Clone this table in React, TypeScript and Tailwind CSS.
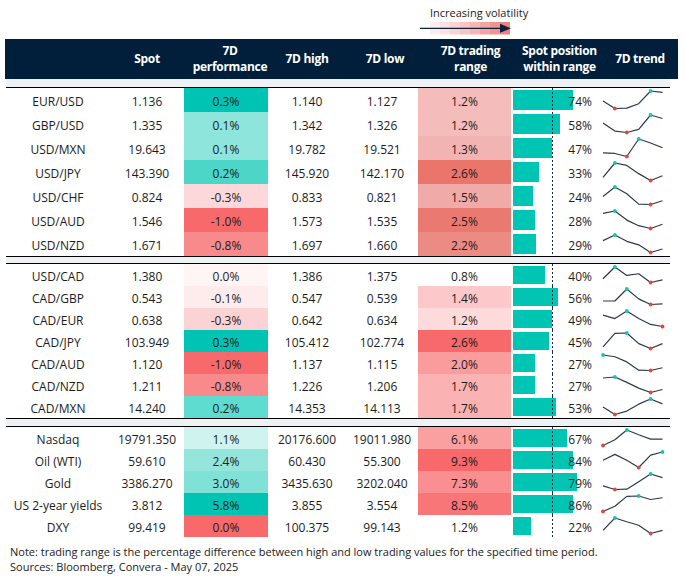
import React from 'react';

type Row = {
  label: string; spot: string; perf: string; pBg: string; high: string; low: string;
  range: string; rBg: string; pos: string; bar: number; spark: number[];
};

const G1: Row[] = [
  { label: 'EUR/USD', spot: '1.136', perf: '0.3%', pBg: '#00c4b3', high: '1.140', low: '1.127', range: '1.2%', rBg: '#f4bdbb', pos: '74%', bar: 60, spark: [38, 60, 59, 46, 9, 13] },
  { label: 'GBP/USD', spot: '1.335', perf: '0.1%', pBg: '#8de5dc', high: '1.342', low: '1.326', range: '1.2%', rBg: '#f4bdbb', pos: '58%', bar: 47, spark: [32, 55, 59, 50, 9, 19] },
  { label: 'USD/MXN', spot: '19.643', perf: '0.1%', pBg: '#8de5dc', high: '19.782', low: '19.521', range: '1.3%', rBg: '#f2b4b2', pos: '47%', bar: 39, spark: [49, 51, 60, 8, 20, 34] },
  { label: 'USD/JPY', spot: '143.390', perf: '0.2%', pBg: '#4cd6c8', high: '145.920', low: '142.170', range: '2.6%', rBg: '#e9756b', pos: '33%', bar: 26, spark: [51, 9, 16, 40, 60, 46] },
  { label: 'USD/CHF', spot: '0.824', perf: '-0.3%', pBg: '#fdd8da', high: '0.833', low: '0.821', range: '1.5%', rBg: '#f0aaa7', pos: '24%', bar: 20, spark: [36, 8, 28, 59, 60, 49] },
  { label: 'USD/AUD', spot: '1.546', perf: '-1.0%', pBg: '#f8696b', high: '1.573', low: '1.535', range: '2.5%', rBg: '#ea7a71', pos: '28%', bar: 22, spark: [17, 10, 36, 52, 60, 48] },
  { label: 'USD/NZD', spot: '1.671', perf: '-0.8%', pBg: '#f98a8c', high: '1.697', low: '1.660', range: '2.2%', rBg: '#ec8b84', pos: '29%', bar: 23, spark: [25, 9, 27, 37, 59, 49] },
];

const G2: Row[] = [
  { label: 'USD/CAD', spot: '1.380', perf: '0.0%', pBg: '#fff5f5', high: '1.386', low: '1.375', range: '0.8%', rBg: '#ffffff', pos: '40%', bar: 32, spark: [55, 20, 45, 40, 66, 58] },
  { label: 'CAD/GBP', spot: '0.543', perf: '-0.1%', pBg: '#feeced', high: '0.547', low: '0.539', range: '1.4%', rBg: '#fcc8c9', pos: '56%', bar: 45, spark: [121, 121, 87, 115, 131, 129] },
  { label: 'CAD/EUR', spot: '0.638', perf: '-0.3%', pBg: '#fcd3d4', high: '0.642', low: '0.634', range: '1.2%', rBg: '#fddbdc', pos: '49%', bar: 39, spark: [165, 175, 153, 175, 192, 198] },
  { label: 'CAD/JPY', spot: '103.949', perf: '0.3%', pBg: '#00c4b3', high: '105.412', low: '102.774', range: '2.6%', rBg: '#f8696b', pos: '45%', bar: 36, spark: [259, 220, 219, 250, 264, 250] },
  { label: 'CAD/AUD', spot: '1.120', perf: '-1.0%', pBg: '#f8696b', high: '1.137', low: '1.115', range: '2.0%', rBg: '#fa9b9c', pos: '27%', bar: 22, spark: [285, 290, 305, 329, 330, 322] },
  { label: 'CAD/NZD', spot: '1.211', perf: '-0.8%', pBg: '#f98a8c', high: '1.226', low: '1.206', range: '1.7%', rBg: '#fbb2b3', pos: '27%', bar: 22, spark: [353, 350, 366, 383, 396, 387] },
  { label: 'CAD/MXN', spot: '14.240', perf: '0.2%', pBg: '#5edccf', high: '14.353', low: '14.113', range: '1.7%', rBg: '#fbb2b3', pos: '53%', bar: 43, spark: [440, 462, 452, 432, 417, 431] },
];

const G3: Row[] = [
  { label: 'Nasdaq', spot: '19791.350', perf: '1.1%', pBg: '#cff4f0', high: '20176.600', low: '19011.980', range: '6.1%', rBg: '#faa0a1', pos: '67%', bar: 54, spark: [67, 50, 21, 35, 48, 48] },
  { label: 'Oil (WTI)', spot: '59.610', perf: '2.4%', pBg: '#94e6dd', high: '60.430', low: '55.300', range: '9.3%', rBg: '#f8696b', pos: '84%', bar: 60, spark: [112, 95, 112, 133, 97, 88] },
  { label: 'Gold', spot: '3386.270', perf: '3.0%', pBg: '#80e1d7', high: '3435.630', low: '3202.040', range: '7.3%', rBg: '#f98f90', pos: '79%', bar: 64, spark: [193, 205, 204, 179, 153, 165] },
  { label: 'US 2-year yields', spot: '3.812', perf: '5.8%', pBg: '#00c4b3', high: '3.855', low: '3.554', range: '8.5%', rBg: '#f87677', pos: '86%', bar: 60, spark: [269, 254, 226, 225, 235, 230] },
  { label: 'DXY', spot: '99.419', perf: '0.0%', pBg: '#f8696b', high: '100.375', low: '99.143', range: '1.2%', rBg: '#ffffff', pos: '22%', bar: 18, spark: [328, 292, 303, 313, 337, 328] },
];

function Spark({ v, h }: { v: number[]; h: number }) {
  const min = Math.min(...v);
  const max = Math.max(...v);
  const top = 3;
  const bot = h - 3.5;
  const pts = v.map((y, i) => [5 + i * 11.9, top + ((y - min) / (max - min)) * (bot - top)]);
  const hi = v.indexOf(min);
  const lo = v.indexOf(max);
  return (
    <svg width={72} height={h} className="block">
      <polyline
        points={pts.map((p) => `${p[0]},${p[1]}`).join(' ')}
        fill="none"
        stroke="#2b3a4d"
        strokeWidth={1.2}
        strokeLinejoin="round"
      />
      <circle cx={pts[hi][0]} cy={pts[hi][1]} r={1.9} fill="#12c6b2" />
      <circle cx={pts[lo][0]} cy={pts[lo][1]} r={1.9} fill="#e4463a" />
    </svg>
  );
}

function DataRow({ r, h }: { r: Row; h: number }) {
  const hClass = h === 24 ? 'h-[24px]' : 'h-[22px]';
  const barH = h === 24 ? 'h-[20px]' : 'h-[18px]';
  return (
    <div className={`grid grid-cols-[104px_74px_84px_78px_72px_93px_87px_72px] ${hClass}`}>
      <div className="flex items-center justify-center pt-[4px] whitespace-nowrap">{r.label}</div>
      <div className="flex items-center justify-center pt-[4px]">{r.spot}</div>
      <div className="flex items-center justify-center pt-[4px]" style={{ backgroundColor: r.pBg }}>{r.perf}</div>
      <div className="flex items-center justify-center pt-[4px]">{r.high}</div>
      <div className="flex items-center justify-center pt-[4px]">{r.low}</div>
      <div className="flex items-center justify-center pt-[4px]" style={{ backgroundColor: r.rBg }}>{r.range}</div>
      <div className="relative flex items-center">
        <div className={`ml-[2px] ${barH} bg-[#00c5b3]`} style={{ width: r.bar }} />
        <div className="absolute left-[41px] top-0 bottom-0 w-px bg-[linear-gradient(#1b2a3f_50%,transparent_50%)] bg-[length:1px_4px]" />
        <div className="absolute right-[6px] top-0 bottom-0 flex items-center pt-[4px]">{r.pos}</div>
      </div>
      <div className="flex items-center">
        <Spark v={r.spark} h={h} />
      </div>
    </div>
  );
}

function Legend() {
  const cols = ['#fdeeee', '#fce2e2', '#fad4d4', '#f7c5c4', '#f5b6b5', '#f2a6a4', '#ef9591', '#ec837d'];
  return (
    <svg width={92} height={16} className="block">
      {cols.map((c, i) => (
        <rect key={i} x={10 + i * 10} y={2} width={10} height={12.5} fill={c} />
      ))}
      <line x1={0} y1={8.3} x2={84} y2={8.3} stroke="#0d1f3a" strokeWidth={1.3} />
      <polygon points="80,3.8 91,8.3 80,12.8" fill="#0d1f3a" />
    </svg>
  );
}

export default function App() {
  return (
    <div className="w-[685px] h-[585px] bg-white text-[#1c1c1c] font-['Open_Sans',sans-serif] text-[12px] overflow-hidden">
      <div className="h-[39px] pl-[420px] pt-[6px]">
        <div className="pl-[10px] text-[11px] leading-[14px] text-[#222]">Increasing volatility</div>
        <Legend />
      </div>
      <div className="ml-[5px] w-[673px] h-[40px] bg-[#011f3b] grid grid-cols-[105px_74px_84px_78px_72px_93px_87px_80px] items-center text-white font-bold text-[12px] leading-[16px] text-center tracking-[-0.3px] whitespace-nowrap">
        <div />
        <div>Spot</div>
        <div className="pl-[8px]">7D<br />performance</div>
        <div>7D high</div>
        <div className="pl-[6px]">7D low</div>
        <div className="pl-[12px]">7D trading<br />range</div>
        <div className="pl-[10px]">Spot position<br />within range</div>
        <div className="pl-[4px]">7D trend</div>
      </div>
      <div className="ml-[6px] w-[664px] h-[8px] bg-[#eef2f4]" />
      <div className="ml-[6px] w-[664px] border-y border-black">
        {G1.map((r) => <DataRow key={r.label} r={r} h={24} />)}
      </div>
      <div className="ml-[6px] w-[664px] h-[6px] bg-[#eef2f4]" />
      <div className="ml-[6px] w-[664px] border-y border-black">
        {G2.map((r) => <DataRow key={r.label} r={r} h={22} />)}
      </div>
      <div className="ml-[6px] w-[664px] h-[7px] bg-[#eef2f4]" />
      <div className="ml-[6px] w-[664px] border-t border-black">
        {G3.map((r) => <DataRow key={r.label} r={r} h={22} />)}
      </div>
      <div className="pl-[10px] pt-[7px] text-[11px] leading-[15px] text-[#1a1a1a]">
        <div>Note: trading range is the percentage difference between high and low trading values for the specified time period.</div>
        <div>Sources: Bloomberg, Convera - May 07, 2025</div>
      </div>
    </div>
  );
}
